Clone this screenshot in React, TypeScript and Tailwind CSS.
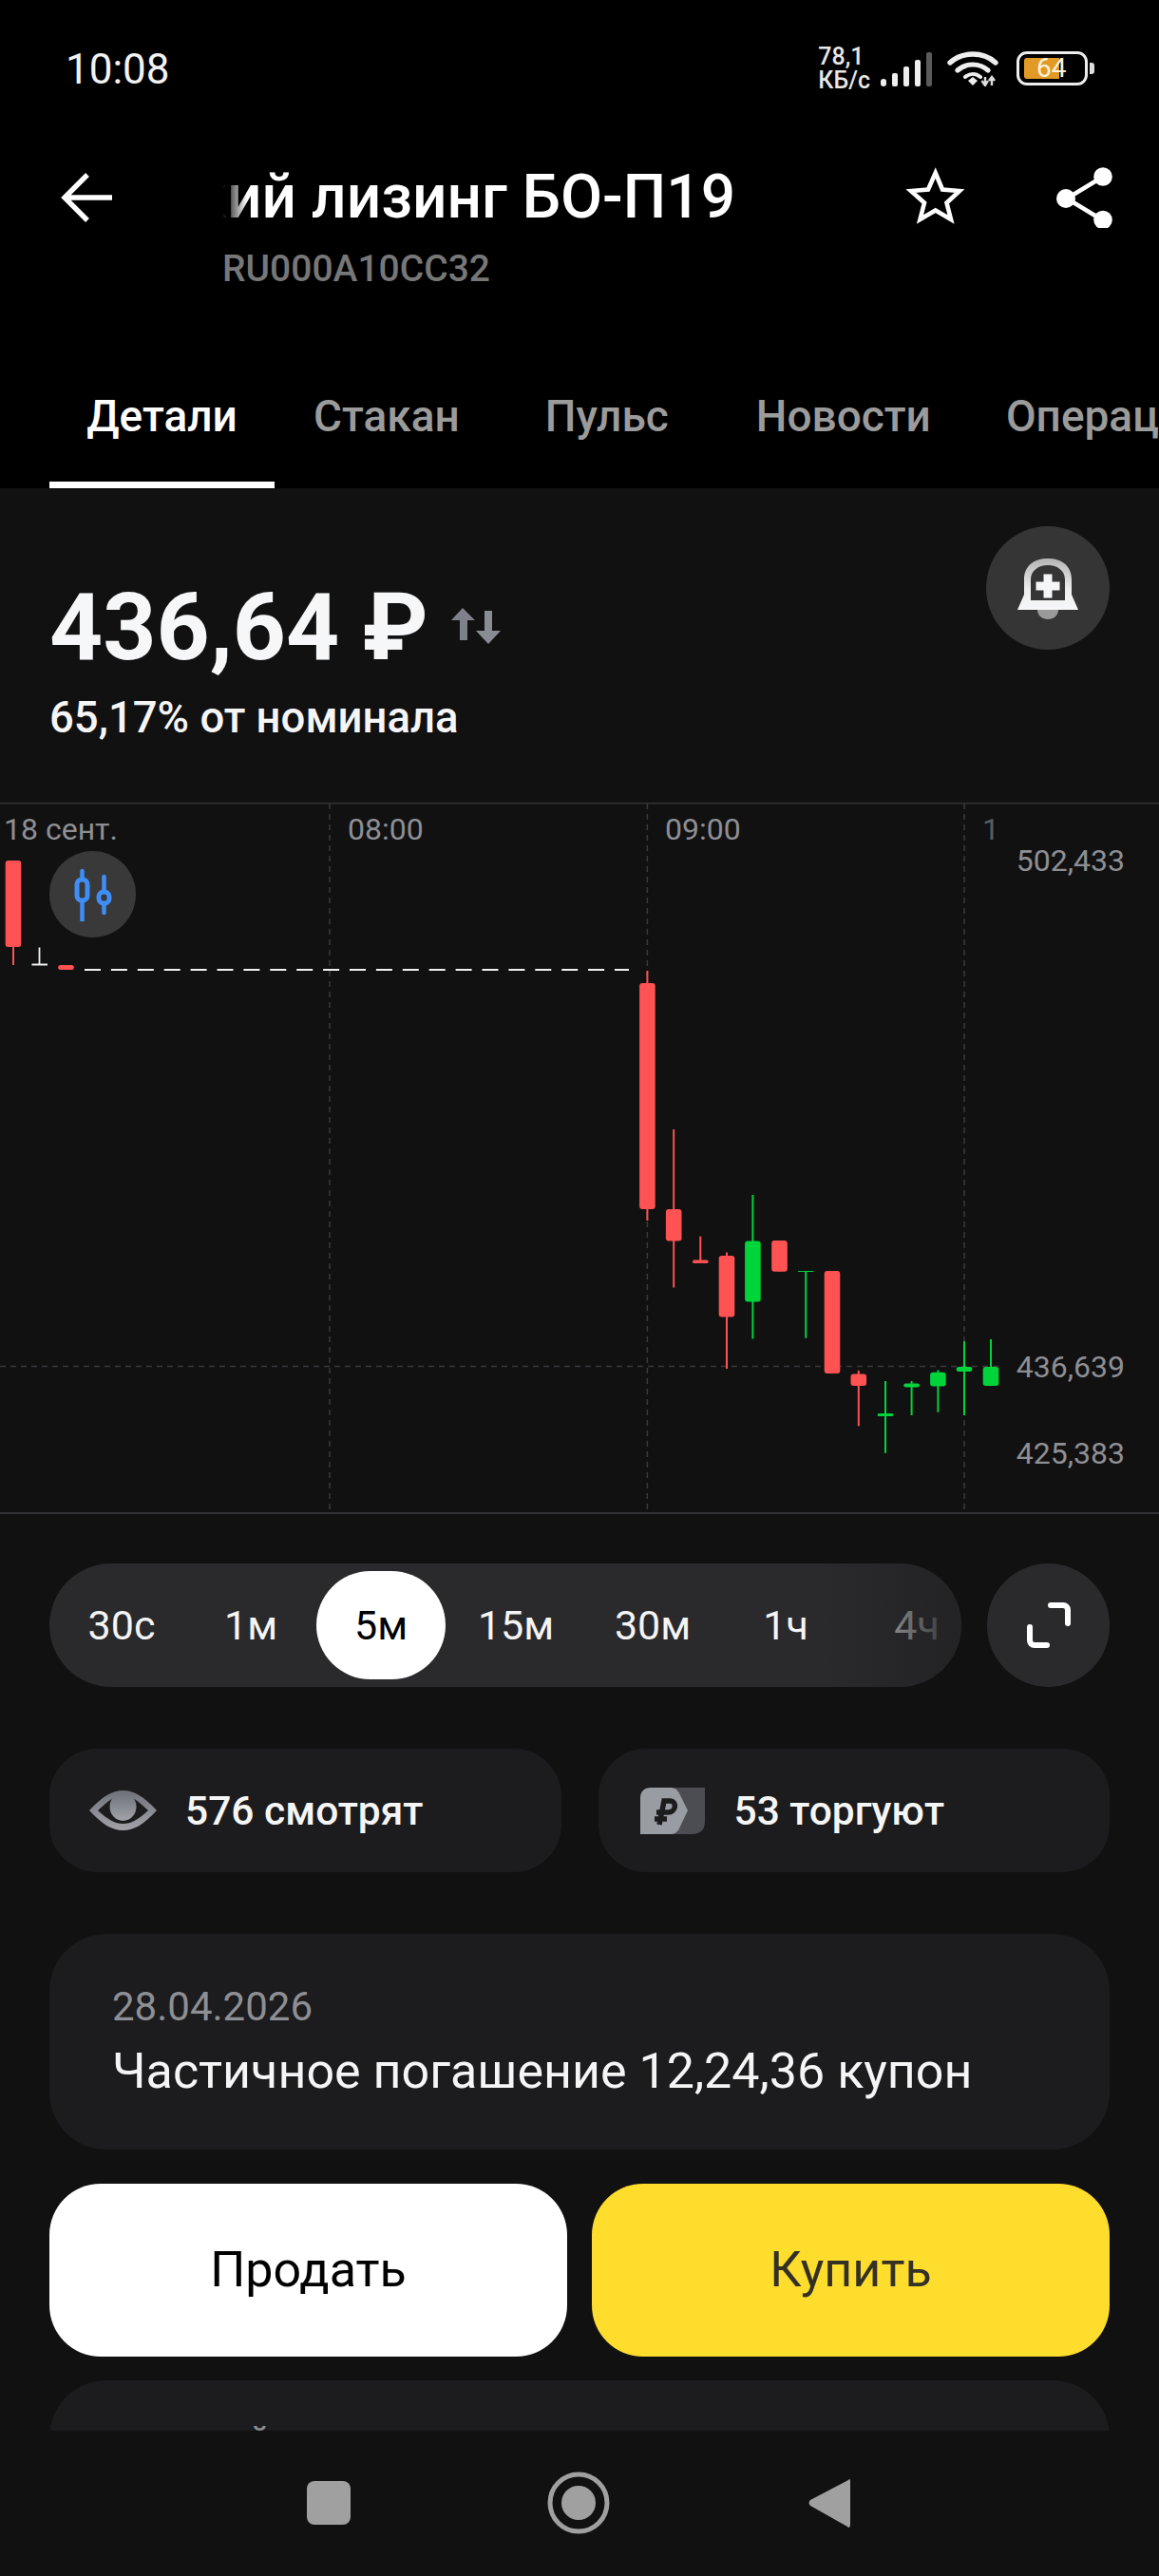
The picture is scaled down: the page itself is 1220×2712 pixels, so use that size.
import React from "react";

const RED = "#ff5252";
const GREEN = "#00d43b";

type C = { x: number; top: number; bot: number; wt: number; wb: number; c: string };
const candles: C[] = [
  { x: 14, top: 906, bot: 997, wt: 906, wb: 1016, c: RED },
  { x: 69.5, top: 1016, bot: 1021, wt: 1016, wb: 1021, c: RED },
  { x: 681.4, top: 1035, bot: 1273, wt: 1022, wb: 1285, c: RED },
  { x: 709.2, top: 1273, bot: 1306.5, wt: 1189, wb: 1355.5, c: RED },
  { x: 737.3, top: 1326.5, bot: 1330, wt: 1301.6, wb: 1328, c: RED },
  { x: 765, top: 1322, bot: 1386.5, wt: 1318.4, wb: 1441, c: RED },
  { x: 792.4, top: 1306.5, bot: 1370.5, wt: 1258, wb: 1409.5, c: GREEN },
  { x: 820.5, top: 1306, bot: 1338.7, wt: 1306, wb: 1338.7, c: RED },
  { x: 848.3, top: 1338, bot: 1339, wt: 1338, wb: 1408.7, c: GREEN },
  { x: 876, top: 1338, bot: 1446, wt: 1338, wb: 1446, c: RED },
  { x: 903.8, top: 1446.6, bot: 1459, wt: 1442.8, wb: 1501.3, c: RED },
  { x: 932, top: 1488, bot: 1491, wt: 1454, wb: 1529.7, c: GREEN },
  { x: 959.6, top: 1456.5, bot: 1460.4, wt: 1454, wb: 1490, c: GREEN },
  { x: 987.4, top: 1444.7, bot: 1459.6, wt: 1442.4, wb: 1486.8, c: GREEN },
  { x: 1015, top: 1439, bot: 1444, wt: 1412, wb: 1490, c: GREEN },
  { x: 1043, top: 1439, bot: 1459, wt: 1410, wb: 1439, c: GREEN },
];

function Chart() {
  return (
    <svg viewBox="0 845 1220 749" className="block w-[1220px] h-[749px]">
      <line x1="0" x2="1220" y1="845.5" y2="845.5" stroke="#333335" strokeWidth="2" />
      <line x1="0" x2="1220" y1="1593" y2="1593" stroke="#333335" strokeWidth="2" />
      {[347, 681.4, 1015].map((x) => (
        <line key={x} x1={x} x2={x} y1="846" y2="1592" stroke="#3a3a3c" strokeWidth="1.5" strokeDasharray="6 5" />
      ))}
      <line x1="0" x2="1056" y1="1438.6" y2="1438.6" stroke="#3a3a3c" strokeWidth="1.5" strokeDasharray="6 5" />
      <line x1="89" x2="662" y1="1021" y2="1021" stroke="#f2f2f2" strokeWidth="2" strokeDasharray="17 10.9" />
      <path d="M41.5 997.5V1015.5M33.5 1015.5H50" stroke="#f2f2f2" strokeWidth="1.8" fill="none" />
      {candles.map((k) => (
        <g key={k.x}>
          <line x1={k.x} x2={k.x} y1={k.wt} y2={k.wb} stroke={k.c} strokeWidth="2" />
          <rect x={k.x - 8.3} y={k.top} width="16.6" height={k.bot - k.top} rx={k.bot - k.top < 6 ? (k.bot - k.top) / 2 : 3} fill={k.c} />
        </g>
      ))}
    </svg>
  );
}

export default function App() {
  return (
    <div className="w-[1220px] h-[2712px] bg-[#111112] flex flex-col overflow-hidden font-['Roboto',sans-serif] text-white">
      <header className="bg-black h-[514px] shrink-0 flex flex-col">
        {/* status bar */}
        <div className="h-[144px] flex items-center justify-between pl-[69px] pr-[68px]">
          <span className="text-[44px] leading-none text-[#f2f2f2] mt-[2px]">10:08</span>
          <div className="flex items-center">
            <div className="text-[25px] leading-[25px] font-medium text-[#e6e6e6] mr-[10px]">
              <div>78,1</div>
              <div>КБ/с</div>
            </div>
            <svg width="58" height="36" viewBox="0 0 58 36" className="mt-[2px]">
              <rect x="1" y="28" width="6" height="8" rx="3" fill="#eee" />
              <rect x="13" y="22" width="6" height="14" rx="2" fill="#eee" />
              <rect x="25" y="15" width="6" height="21" rx="2" fill="#eee" />
              <rect x="37" y="8" width="6" height="28" rx="2" fill="#eee" />
              <rect x="49" y="0" width="6" height="36" rx="2" fill="#5a5a5a" />
            </svg>
            <svg width="56" height="38" viewBox="0 0 56 38" className="ml-[13px]">
              <path d="M3 13C16 1 38 1 51 13" stroke="#eee" strokeWidth="5.4" fill="none" strokeLinecap="round" />
              <path d="M11 21C20 13 34 13 43 21" stroke="#eee" strokeWidth="5.2" fill="none" strokeLinecap="round" />
              <path d="M19 28C24 24 30 24 35 28" stroke="#eee" strokeWidth="4" fill="none" strokeLinecap="round" />
              <path d="M22 32L27 28L32 32L27 37Z" fill="#eee" />
              <path d="M40 28V37M36.5 32L40 37L43 32M47 37V28M44 32L47 28L50 32" stroke="#ddd" strokeWidth="2.4" fill="none" />
            </svg>
            <div className="relative ml-[17px] w-[75px] h-[36px] rounded-[11px] border-[3px] border-[#eee]">
              <div className="absolute left-[5px] top-[4px] w-[37px] h-[22px] rounded-l-[3px] bg-[#e19a26]" />
              <span className="absolute left-[18px] top-0 text-[28px] leading-[30px] text-[#fff3dc]">64</span>
            </div>
            <div className="ml-[2px] w-[5px] h-[12px] rounded-r-[3px] bg-[#ddd]" />
          </div>
        </div>
        {/* title row */}
        <div className="h-[218px] flex items-start">
          <svg width="56" height="56" viewBox="0 0 56 56" className="ml-[64px] mt-[36px] shrink-0">
            <path d="M28 4L4 28L28 52M4 28H54" stroke="#fff" strokeWidth="5.4" fill="none" />
          </svg>
          <div className="ml-[114px] w-[600px] pt-[28px]">
            <div className="relative w-[540px] h-[72px] overflow-hidden flex justify-end">
              <span className="text-[64px] leading-[72px] font-medium whitespace-nowrap">Балтийский лизинг БО-П19</span>
              <div className="absolute left-0 top-0 w-[26px] h-full bg-gradient-to-r from-black to-transparent" />
            </div>
            <div className="mt-[16px] text-[39px] leading-[46px] font-medium text-[#777777]">RU000A10CC32</div>
          </div>
          <svg width="70" height="66" viewBox="0 0 70 66" className="ml-[116px] mt-[30px] shrink-0">
            <path d="M34.7 8L42 25.5L60 27L46.5 39.5L51 57L34.7 47.5L18.5 57L23 39.5L9 27L27 25.5Z" stroke="#fff" strokeWidth="4.6" fill="none" />
          </svg>
          <svg width="60" height="68" viewBox="0 0 60 68" className="ml-[91px] mt-[28px] shrink-0">
            <path d="M50 14L12 37L50 60" stroke="#fff" strokeWidth="4.5" fill="none" />
            <circle cx="50" cy="14" r="9.8" fill="#fff" />
            <circle cx="11" cy="37" r="10" fill="#fff" />
            <circle cx="50" cy="59.5" r="9.8" fill="#fff" />
          </svg>
        </div>
        {/* tabs */}
        <div className="flex-1 flex items-stretch overflow-hidden text-[46px] font-medium text-[#9b9b9b]">
          <div className="ml-[52px] w-[237px] shrink-0 border-b-[7px] border-white flex items-center justify-center text-white pt-[7px]">Детали</div>
          <div className="ml-[41px] shrink-0 flex items-center">Стакан</div>
          <div className="ml-[90px] shrink-0 flex items-center">Пульс</div>
          <div className="ml-[92px] shrink-0 flex items-center">Новости</div>
          <div className="ml-[79px] shrink-0 flex items-center">Операции</div>
        </div>
      </header>

      <main className="h-[2045px] shrink-0 overflow-hidden">
        {/* price */}
        <section className="h-[331px] flex justify-between px-[52px]">
          <div className="pt-[90px]">
            <div className="flex items-center">
              <span className="text-[98px] leading-[114px] font-bold text-[#f6f7f8]">436,64 ₽</span>
              <svg width="54" height="40" viewBox="0 0 54 40" className="ml-[23px] mt-[-6px]">
                <path d="M13 2L26 15H18V36H10V15H1Z" fill="#7e8189" />
                <path d="M40 40L53 26H44V5H36V26H27Z" fill="#8a8c93" />
              </svg>
            </div>
            <div className="mt-[12px] text-[45.5px] leading-[52px] font-medium text-[#f5f5f6]">65,17% от номинала</div>
          </div>
          <div className="mt-[40px] w-[130px] h-[130px] rounded-full bg-[#353536] flex items-center justify-center">
            <svg width="64" height="66" viewBox="0 0 64 66" className="mt-[4px]">
              <defs>
                <linearGradient id="bellG" x1="0" y1="0" x2="0" y2="1">
                  <stop offset="0" stopColor="#b4b4b4" />
                  <stop offset="0.6" stopColor="#eeeeee" />
                  <stop offset="1" stopColor="#f6f7f8" />
                </linearGradient>
              </defs>
              <path d="M21 54H43C43 60 38 64 32 64S21 60 21 54Z" fill="#9a9a9a" />
              <path fillRule="evenodd" d="M0 54L7 38V22C7 8 17 0 32 0S57 8 57 22V38L64 54ZM14 44H50V22C50 13 42 7 32 7S14 13 14 22Z" fill="url(#bellG)" />
              <path d="M27.5 16.5H36.5V24.5H44.5V33.5H36.5V41.5H27.5V33.5H19.5V24.5H27.5Z" fill="#f5f6f7" />
            </svg>
          </div>
        </section>

        {/* chart */}
        <section className="relative h-[749px] text-[32px] leading-[36px] text-[#8e8f94]">
          <Chart />
          <span className="absolute left-[4px] top-[10px]">18 сент.</span>
          <span className="absolute left-[366px] top-[10px]">08:00</span>
          <span className="absolute left-[700px] top-[10px]">09:00</span>
          <span className="absolute left-[1034px] top-[10px] text-[#5c5c60]">1</span>
          <span className="absolute right-[36px] top-[43px]">502,433</span>
          <span className="absolute right-[36px] top-[576px]">436,639</span>
          <span className="absolute right-[36px] top-[667px]">425,383</span>
          <div className="absolute left-[52px] top-[51px] w-[91px] h-[91px] rounded-full bg-[#39393a] flex items-center justify-center">
            <svg width="46" height="56" viewBox="0 0 46 56">
              <path d="M11.5 3V55" stroke="#3f8ef5" strokeWidth="4.5" strokeLinecap="round" />
              <rect x="6" y="12" width="11" height="22" rx="5" fill="#39393a" stroke="#3f8ef5" strokeWidth="5" />
              <path d="M34.5 9V47" stroke="#3f8ef5" strokeWidth="4.5" strokeLinecap="round" />
              <rect x="29" y="25" width="11" height="12" rx="5" fill="#39393a" stroke="#3f8ef5" strokeWidth="5" />
            </svg>
          </div>
        </section>

        {/* time frames */}
        <section className="mt-[52px] px-[52px] flex gap-[27px]">
          <div className="relative flex-1 h-[130px] rounded-full bg-[#2a2a2c] overflow-hidden flex items-center text-[43px] text-[#f4f4f4]">
            <div className="w-[152px] text-center shrink-0">30с</div>
            <div className="w-[120px] text-center shrink-0">1м</div>
            <div className="ml-[9px] w-[136px] h-[114px] rounded-full bg-white text-black flex items-center justify-center shrink-0">5м</div>
            <div className="w-[148px] text-center shrink-0">15м</div>
            <div className="w-[140px] text-center shrink-0">30м</div>
            <div className="w-[140px] text-center shrink-0">1ч</div>
            <div className="w-[136px] text-center shrink-0">4ч</div>
            <div className="absolute right-0 top-0 h-full w-[150px] bg-gradient-to-r from-transparent to-[#232325]" />
          </div>
          <div className="w-[129px] h-[130px] rounded-full bg-[#2a2a2c] flex items-center justify-center">
            <svg width="46" height="48" viewBox="0 0 46 48">
              <path d="M25 3H38C41 3 43 5 43 8V22" stroke="#fff" strokeWidth="6" fill="none" strokeLinecap="round" />
              <path d="M3 26V40C3 43 5 45 8 45H21" stroke="#fff" strokeWidth="6" fill="none" strokeLinecap="round" />
            </svg>
          </div>
        </section>

        {/* watchers */}
        <section className="mt-[65px] px-[52px] grid grid-cols-2 gap-[39px]">
          <div className="h-[130px] rounded-[50px] bg-[#1c1c1e] flex items-center pl-[42px] text-[42.5px] font-medium text-[#f5f5f5]">
            <svg width="71" height="42" viewBox="0 0 71 42" className="shrink-0">
              <defs>
                <linearGradient id="eyeG" x1="0" y1="0" x2="0" y2="1">
                  <stop offset="0" stopColor="#6f7279" />
                  <stop offset="1" stopColor="#a1a3a9" />
                </linearGradient>
              </defs>
              <path d="M0 21C14 6 24 0 35.5 0S57 6 71 21C57 36 47 42 35.5 42S14 36 0 21Z" fill="url(#eyeG)" />
              <path d="M9 21C20 11 27 5 35.5 5S51 11 62 21C51 31 44 35 35.5 35S20 31 9 21Z" fill="#1c1c1e" />
              <ellipse cx="35.5" cy="17" rx="14" ry="15" fill="url(#eyeG)" />
            </svg>
            <span className="ml-[30px] pt-[2px]">576 смотрят</span>
          </div>
          <div className="h-[130px] rounded-[50px] bg-[#1c1c1e] flex items-center pl-[44px] text-[42.5px] font-medium text-[#f5f5f5]">
            <svg width="68" height="49" viewBox="0 0 68 49" className="shrink-0">
              <path d="M30 0H68V36C68 44 63 49 55 49H30Z" fill="#4b4d53" />
              <path d="M0 11C0 4 4 0 11 0H31C36 0 39 2 41 6L50 24L41 43C39 47 36 49 31 49H0Z" fill="#9a9ca3" />
              <path d="M20 39L25 14H31C39 14 38 26 29 26H17M15 33H28" stroke="#1c1c1e" strokeWidth="5.5" fill="none" />
            </svg>
            <span className="ml-[31px] pt-[2px]">53 торгуют</span>
          </div>
        </section>

        {/* event */}
        <section className="mx-[52px] mt-[65px] h-[227px] rounded-[60px] bg-[#1c1c1e] pl-[66px] pt-[52px]">
          <div className="text-[42px] leading-[50px] text-[#8e8f94]">28.04.2026</div>
          <div className="mt-[13px] text-[52px] leading-[60px] text-[#f5f5f5]">Частичное погашение 12,24,36 купон</div>
        </section>

        {/* actions */}
        <section className="mt-[36px] px-[52px] grid grid-cols-2 gap-[26px]">
          <button className="h-[182px] rounded-[54px] bg-white text-black text-[52px]">Продать</button>
          <button className="h-[182px] rounded-[54px] bg-[#ffdd2d] text-[#333124] text-[52px]">Купить</button>
        </section>

        <section className="mx-[52px] mt-[25px] h-[200px] rounded-t-[60px] bg-[#1c1c1e] pl-[66px] pt-[39px] text-[42px] leading-[50px] text-[#8e8f94]">
          ценовой коридор
        </section>
      </main>

      <nav className="flex-1 bg-[#111112] relative">
        <div className="flex items-center h-full">
          <div className="ml-[323px] w-[46px] h-[46px] rounded-[8px] bg-[#a0a0a0] mt-[-2px]" />
          <svg width="66" height="66" viewBox="0 0 66 66" className="ml-[207px] mt-[-1px]">
            <circle cx="33" cy="33" r="30" stroke="#a0a0a0" strokeWidth="5" fill="none" />
            <circle cx="33" cy="33" r="18" fill="#a0a0a0" />
          </svg>
          <svg width="44" height="54" viewBox="0 0 44 54" className="ml-[209px] mt-[-2px]">
            <path d="M42 3C43 1 44 2 44 4V50C44 53 42 54 41 52L2 30C0 28 0 26 2 24Z" fill="#a0a0a0" />
          </svg>
        </div>
      </nav>
    </div>
  );
}
